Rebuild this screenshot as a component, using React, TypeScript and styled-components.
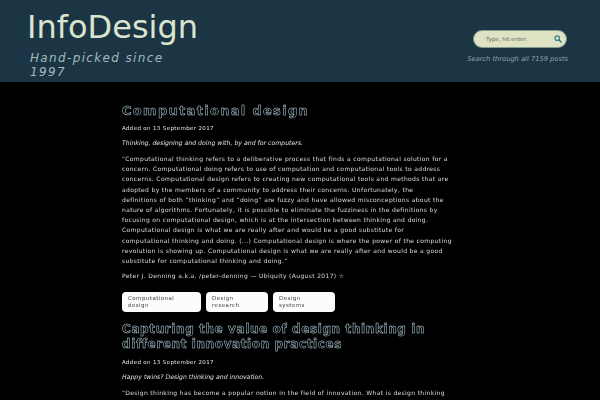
import React from "react";
import styled, { createGlobalStyle, css } from "styled-components";

const GlobalStyle = createGlobalStyle`
  html, body {
    margin: 0;
    padding: 0;
    height: 400px;
    overflow: hidden;
    background: #000;
    font-family: "DejaVu Sans", sans-serif;
  }
`;

// small text comes out with coloured fringes otherwise
const plainGrey = css`
  filter: grayscale(1);
`;

const Header = styled.header`
  height: 82px;
  background: #1b3545;
  display: flex;
  justify-content: space-between;
  box-sizing: border-box;
  padding: 8px 33px 0 27px;
`;

const Brand = styled.div`
  width: 150px;
`;

const Logo = styled.h1`
  margin: 0;
  font-size: 32px;
  line-height: 38px;
  font-weight: 400;
  color: #dbe5cd;
  white-space: nowrap;
`;

const Tagline = styled.p`
  margin: 5px 0 0 3px;
  font-size: 12px;
  line-height: 14px;
  font-style: italic;
  letter-spacing: 1.35px;
  color: #a3b9be;
`;

const SearchArea = styled.div`
  display: flex;
  flex-direction: column;
  align-items: flex-end;
  padding-top: 22px;
`;

const SearchBox = styled.div`
  width: 94px;
  height: 18px;
  box-sizing: border-box;
  display: flex;
  align-items: center;
  justify-content: space-between;
  padding: 0 4px 0 12px;
  border-radius: 9px;
  background: #dfe3c3;
  border: 1px solid #7f9a8f;
  font-size: 5.5px;
  color: #5b6a68;
`;

const SearchNote = styled.p`
  margin: 7px -1px 0 0;
  font-size: 6.7px;
  line-height: 9px;
  font-style: italic;
  color: #8ea5ad;
  white-space: nowrap;
`;

const Main = styled.main`
  width: 332px;
  margin-left: 122px;
  padding-top: 21px;
`;

const PostTitle = styled.h2<{ $size: number; $tracking: number }>`
  margin: 0 0 6px;
  font-size: ${(p) => p.$size}px;
  line-height: 15px;
  font-weight: 700;
  letter-spacing: ${(p) => p.$tracking}px;
  color: #000;
  -webkit-text-stroke: 0.5px #a4d4e6;
  white-space: nowrap;
  filter: grayscale(0.35);
`;

const Added = styled.p`
  margin: 0 0 6px;
  font-size: 5.5px;
  line-height: 8px;
  letter-spacing: 0.35px;
  color: #e6e6e6;
  ${plainGrey}
`;

const Lead = styled.p`
  margin: 0 0 7px;
  font-size: 6.2px;
  line-height: 9px;
  font-style: italic;
  color: #e0e0e0;
  white-space: nowrap;
  ${plainGrey}
`;

const Quote = styled.p`
  margin: 0 0 5px;
  font-size: 6px;
  line-height: 10.2px;
  letter-spacing: 0.35px;
  color: #dcdcdc;
  white-space: nowrap;
  ${plainGrey}
`;

const Tags = styled.div`
  display: flex;
  gap: 5px;
  margin: 11px 0 10px;
`;

const Tag = styled.a<{ $width: number }>`
  width: ${(p) => p.$width}px;
  height: 20px;
  box-sizing: border-box;
  padding: 3px 12px 3px 6px;
  border-radius: 4px;
  background: #fcfcf6;
  font-size: 5.5px;
  line-height: 7px;
  letter-spacing: 0.45px;
  color: #3c4446;
  ${plainGrey}
`;

const SearchIcon = () => (
  <svg width="8" height="8" viewBox="0 0 10 10" fill="none" stroke="#2f7f95" strokeWidth="1.5">
    <circle cx="4" cy="4" r="2.8" />
    <path d="M6 6l3.2 3.2" strokeWidth="2" />
  </svg>
);

const firstQuote = [
  "“Computational thinking refers to a deliberative process that finds a computational solution for a",
  "concern. Computational doing refers to use of computation and computational tools to address",
  "concerns. Computational design refers to creating new computational tools and methods that are",
  "adopted by the members of a community to address their concerns. Unfortunately, the",
  "definitions of both “thinking” and “doing” are fuzzy and have allowed misconceptions about the",
  "nature of algorithms. Fortunately, it is possible to eliminate the fuzziness in the definitions by",
  "focusing on computational design, which is at the intersection between thinking and doing.",
  "Computational design is what we are really after and would be a good substitute for",
  "computational thinking and doing. (...) Computational design is where the power of the computing",
  "revolution is showing up. Computational design is what we are really after and would be a good",
  "substitute for computational thinking and doing.”",
];

const App: React.FC = () => {
  return (
    <>
      <GlobalStyle />
      <Header>
        <Brand>
          <Logo>InfoDesign</Logo>
          <Tagline>Hand-picked since 1997</Tagline>
        </Brand>
        <SearchArea>
          <SearchBox>
            <span>Type, hit enter.</span>
            <SearchIcon />
          </SearchBox>
          <SearchNote>Search through all 7159 posts</SearchNote>
        </SearchArea>
      </Header>
      <Main>
        <PostTitle $size={13} $tracking={1.3}>Computational design</PostTitle>
        <Added>Added on 13 September 2017</Added>
        <Lead>Thinking, designing and doing with, by and for computers.</Lead>
        <Quote>
          {firstQuote.map((line) => (
            <React.Fragment key={line}>
              {line}
              <br />
            </React.Fragment>
          ))}
        </Quote>
        <Quote>Peter J. Denning a.k.a. /peter-denning — Ubiquity (August 2017) ☆</Quote>
        <Tags>
          <Tag $width={79}>Computational design</Tag>
          <Tag $width={62}>Design research</Tag>
          <Tag $width={62}>Design systems</Tag>
        </Tags>
        <PostTitle $size={12} $tracking={0.6}>
          Capturing the value of design thinking in
          <br />
          different innovation practices
        </PostTitle>
        <Added>Added on 13 September 2017</Added>
        <Lead>Happy twins? Design thinking and innovation.</Lead>
        <Quote>
          “Design thinking has become a popular notion in the field of innovation. What is design thinking
          <br />
          and how, more more precisely, what could it bring to a company's innovation practices?
        </Quote>
      </Main>
    </>
  );
};

export default App;
